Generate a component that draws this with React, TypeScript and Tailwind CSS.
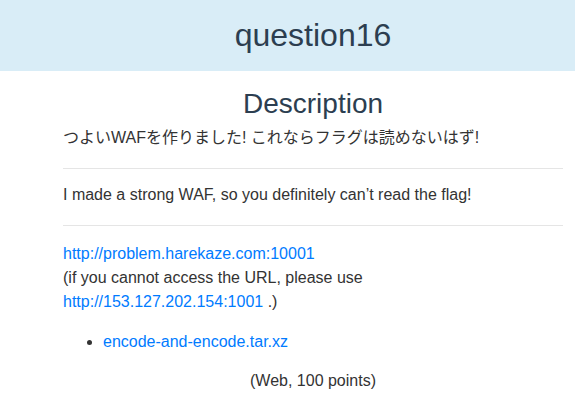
export default function App() {
  return (
    <div className="w-[575px] h-[413px] bg-white overflow-hidden" style={{ fontFamily: '"Liberation Sans", "Noto Sans CJK JP", sans-serif' }}>
      <div className="h-[71px] bg-[#d9edf7] flex items-center">
        <h1 className="ml-[63px] w-[500px] text-center text-[32px] leading-none text-[#2c3e50] pb-[2px]">question16</h1>
      </div>
      <div className="ml-[63px] w-[500px] text-[16px] leading-[24px] text-[#333]">
        <h2 className="text-[28px] leading-[32px] text-[#2c3e50] text-center mt-[17px]">Description</h2>
        <p className="mt-[6px]">つよいWAFを作りました! これならフラグは読めないはず!</p>
        <hr className="border-0 border-t border-[#e5e5e5] mt-[18px] mb-[14px]" />
        <p>I made a strong WAF, so you definitely can’t read the flag!</p>
        <hr className="border-0 border-t border-[#e5e5e5] mt-[18px] mb-[16px]" />
        <p>
          <a className="text-[#007bff]" href="#">http://problem.harekaze.com:10001</a>
          <br />
          (if you cannot access the URL, please use
          <br />
          <a className="text-[#007bff]" href="#">http://153.127.202.154:1001</a> .)
        </p>
        <ul className="list-disc pl-[40px] mt-[16px]">
          <li className="marker:text-[#333]">
            <a className="text-[#007bff]" href="#">encode-and-encode.tar.xz</a>
          </li>
        </ul>
        <p className="text-center mt-[15px]">(Web, 100 points)</p>
      </div>
    </div>
  );
}
